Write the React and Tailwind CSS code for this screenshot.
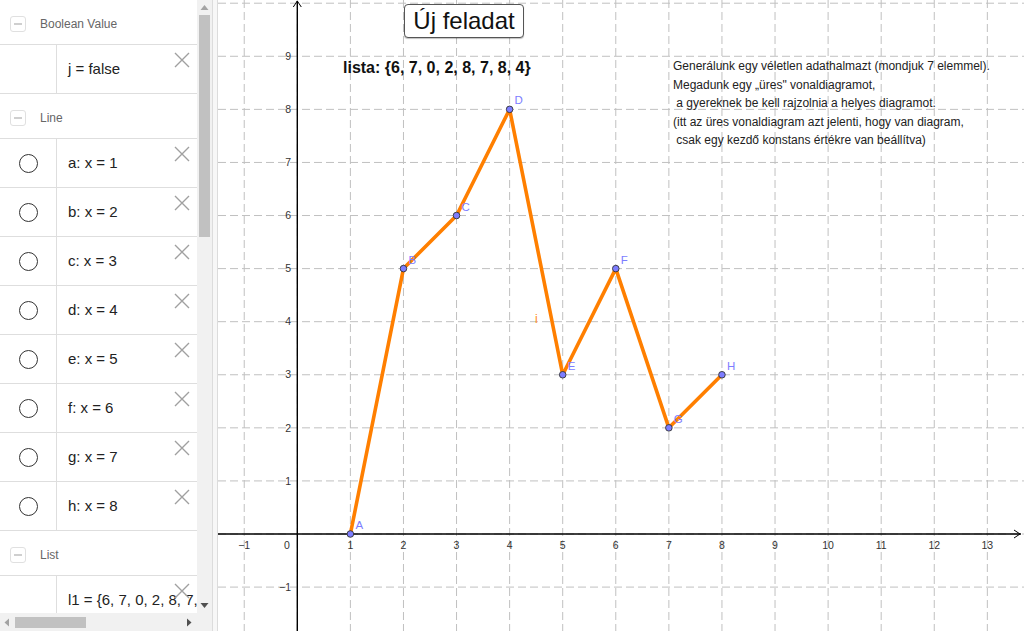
import React from 'react';

const font = { fontFamily: '"Liberation Sans", Arial, sans-serif' };

// graph geometry (svg coords inside the graphics panel)
const X0 = 79.3;
const Y0 = 534;
const U = 53.08;
const px = (x) => X0 + x * U;
const py = (y) => Y0 - y * U;

const data = [0, 5, 6, 8, 3, 5, 2, 3];
const names = ['A', 'B', 'C', 'D', 'E', 'F', 'G', 'H'];

const lines = [
  'a: x = 1',
  'b: x = 2',
  'c: x = 3',
  'd: x = 4',
  'e: x = 5',
  'f: x = 6',
  'g: x = 7',
  'h: x = 8',
];

const CloseIcon = () => (
  <svg className="absolute right-[7px] top-[7px]" width="16" height="16" viewBox="0 0 16 16">
    <path d="M1 1 L15 15 M15 1 L1 15" stroke="#a0a0a0" strokeWidth="1.4" fill="none" />
  </svg>
);

const Header = ({ label }) => (
  <div className="h-[45px] shrink-0 flex items-center pt-[3px] border-b border-[#dedede]">
    <div className="ml-[10px] w-[16px] h-[16px] rounded-[3px] border border-[#e0e0e0] flex items-center justify-center">
      <div className="w-[8px] h-[2px] bg-[#cfcfcf]" />
    </div>
    <span className="ml-[14px] text-[12px] text-[#666]">{label}</span>
  </div>
);

const Item = ({ text, circle }) => (
  <div className="relative h-[49px] shrink-0 flex border-b border-[#dedede]">
    <div className="w-[57px] shrink-0 border-r border-[#dedede] flex items-center justify-center">
      {circle && <div className="w-[19px] h-[19px] rounded-full border border-[#333]" />}
    </div>
    <div className="flex items-center pl-[11px] text-[15px] text-[#222] whitespace-nowrap overflow-hidden">
      {text}
    </div>
    <CloseIcon />
  </div>
);

const AlgebraView = () => (
  <div className="w-[212px] h-full flex flex-col shrink-0">
    <div className="flex h-[613px]">
      <div className="w-[197px] flex flex-col overflow-hidden bg-white">
        <Header label="Boolean Value" />
        <Item text="j = false" />
        <Header label="Line" />
        {lines.map((t) => (
          <Item key={t} text={t} circle />
        ))}
        <Header label="List" />
        <Item text="l1 = {6, 7, 0, 2, 8, 7, 8, 4}" />
      </div>
      {/* vertical scrollbar */}
      <div className="w-[15px] bg-[#f1f1f1] flex flex-col items-center">
        <svg width="15" height="15" viewBox="0 0 15 15">
          <path d="M3.5 10 L7.5 5 L11.5 10 Z" fill="#a3a3a3" />
        </svg>
        <div className="w-[11px] h-[222px] bg-[#c1c1c1]" />
        <div className="flex-1" />
        <svg width="15" height="15" viewBox="0 0 15 15">
          <path d="M3.5 5 L7.5 10 L11.5 5 Z" fill="#505050" />
        </svg>
      </div>
    </div>
    {/* horizontal scrollbar */}
    <div className="flex flex-1">
      <div className="w-[197px] bg-[#f1f1f1] flex items-center">
        <svg width="15" height="15" viewBox="0 0 15 15">
          <path d="M9 3.5 L4.5 7.5 L9 11.5 Z" fill="#a3a3a3" />
        </svg>
        <div className="w-[71px] h-[11px] bg-[#c1c1c1]" />
        <div className="flex-1" />
        <svg width="15" height="15" viewBox="0 0 15 15">
          <path d="M5 3.5 L9.5 7.5 L5 11.5 Z" fill="#505050" />
        </svg>
      </div>
      <div className="flex-1 bg-[#f1f1f1]" />
    </div>
  </div>
);

const Graph = () => {
  const vk = [];
  for (let k = -1; k <= 13; k++) vk.push(k);
  const hk = [];
  for (let k = -1; k <= 10; k++) hk.push(k);
  const pts = data.map((v, i) => [px(i + 1), py(v)]);

  return (
    <svg className="absolute inset-0" width="806" height="631" viewBox="0 0 806 631" style={font}>
      {vk.map((k) => (
        <line key={'v' + k} x1={px(k)} y1="0" x2={px(k)} y2="631" stroke="#c0c0c0" strokeDasharray="8 4" />
      ))}
      {hk.map((k) => (
        <line key={'h' + k} x1="0" y1={py(k)} x2="806" y2={py(k)} stroke="#c0c0c0" strokeDasharray="8 4" />
      ))}

      {/* axes */}
      <line x1="0" y1={Y0} x2="803" y2={Y0} stroke="#000" strokeWidth="1.4" />
      <path d="M796 530 L802 534 L796 538" stroke="#000" fill="none" />
      <line x1={X0} y1="631" x2={X0} y2="1" stroke="#000" strokeWidth="1.4" />
      <path d="M75.3 7 L79.3 1 L83.3 7" stroke="#000" fill="none" />

      {vk.filter((k) => k !== 0).map((k) => (
        <text key={'xl' + k} x={px(k)} y="549" fontSize="10.5" fill="#333" textAnchor="middle">
          {k < 0 ? '\u2212' + Math.abs(k) : k}
        </text>
      ))}
      <text x="69" y="549" fontSize="10.5" fill="#333" textAnchor="middle">0</text>
      {hk.filter((k) => k !== 0 && k < 10).map((k) => (
        <text key={'yl' + k} x="73" y={py(k) + 3.7} fontSize="10.5" fill="#333" textAnchor="end">
          {k < 0 ? '\u2212' + Math.abs(k) : k}
        </text>
      ))}

      {/* line chart */}
      <polyline
        points={pts.map((p) => p.join(',')).join(' ')}
        fill="none"
        stroke="#ff7f00"
        strokeWidth="3.6"
        strokeLinejoin="round"
      />
      {pts.map((p, i) => (
        <g key={names[i]}>
          <circle cx={p[0]} cy={p[1]} r="3.3" fill="#7d7dff" stroke="#333" strokeWidth="0.9" />
          <text x={p[0] + 5} y={p[1] - 5} fontSize="11.5" fill="#7d7dff">{names[i]}</text>
        </g>
      ))}
      <text x="317" y="323" fontSize="12" fill="#ff8a1f">i</text>
    </svg>
  );
};

export default function App() {
  return (
    <div className="w-[1024px] h-[631px] flex overflow-hidden bg-white" style={font}>
      <AlgebraView />
      <div className="w-[6px] shrink-0 bg-[#f7f7f7] border-l border-r border-[#dcdcdc]" />
      <div className="relative flex-1 overflow-hidden bg-white">
        <Graph />
        <button className="absolute left-[186px] top-[4px] w-[120px] h-[34px] rounded-[4px] border border-[#555] bg-white text-[24px] leading-none text-[#111] shadow-[0_1px_1px_rgba(0,0,0,0.25)] flex items-center justify-center">
          Új feladat
        </button>
        <div className="absolute left-[125px] top-[60px] text-[16px] leading-none font-bold text-[#111] whitespace-nowrap">
          lista: {'{'}6, 7, 0, 2, 8, 7, 8, 4{'}'}
        </div>
        <div className="absolute left-[455px] top-[57px] text-[12px] leading-[18.5px] text-[#222] whitespace-pre">
          <div>Generálunk egy véletlen adathalmazt (mondjuk 7 elemmel).</div>
          <div>Megadunk egy „üres" vonaldiagramot,</div>
          <div> a gyereknek be kell rajzolnia a helyes diagramot.</div>
          <div>(itt az üres vonaldiagram azt jelenti, hogy van diagram,</div>
          <div> csak egy kezdő konstans értékre van beállítva)</div>
        </div>
      </div>
    </div>
  );
}
